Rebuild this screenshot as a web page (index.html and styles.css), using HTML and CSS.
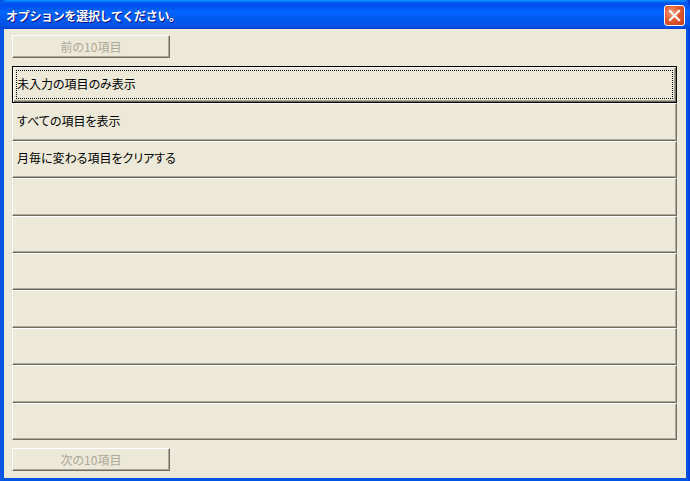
FILE: index.html
```html
<!DOCTYPE html>
<html lang="ja">
<head>
<meta charset="utf-8">
<link rel="stylesheet" href="styles.css">
</head>
<body>
<div class="window">
  <div class="titlebar">
    <span class="title">オプションを選択してください。</span>
    <span class="close">
      <svg width="13" height="13" viewBox="0 0 13 13"><path d="M2 2 L11 11 M11 2 L2 11" stroke="#fff" stroke-width="2.2" stroke-linecap="square"/></svg>
    </span>
  </div>
  <div class="client">
    <div class="btn disabled">前の10項目</div>
    <div class="list">
      <div class="row focused"><span class="focus">未入力の項目のみ表示</span></div>
      <div class="row"><span class="label">すべての項目を表示</span></div>
      <div class="row"><span class="label">月毎に変わる項目をクリアする</span></div>
      <div class="row"></div>
      <div class="row"></div>
      <div class="row"></div>
      <div class="row"></div>
      <div class="row"></div>
      <div class="row"></div>
      <div class="row"></div>
    </div>
    <div class="btn disabled">次の10項目</div>
  </div>
</div>
</body>
</html>
```
FILE: styles.css
```css
html, body {
  margin: 0;
  padding: 0;
  background: #0054E3;
}
.window {
  width: 690px;
  height: 481px;
  display: flex;
  flex-direction: column;
  background: linear-gradient(to right, #0831D9 0, #166AEE 1px, #0054E3 2px, #0054E3 688px, #0831D9 690px);
  font-family: "Noto Sans CJK JP", "Noto Sans", sans-serif;
  font-size: 12px;
  box-sizing: border-box;
}
.titlebar {
  height: 29px;
  flex: none;
  display: flex;
  align-items: center;
  justify-content: space-between;
  padding: 0 5px 0 6px;
  background: linear-gradient(to bottom, #0997FF 0, #0053EE 3px, #0050EE 6px, #0066FF 12px, #0058EE 20px, #0055EA 25px, #0048D8 28px, #003DD7 29px);
  border-radius: 7px 7px 0 0;
}
.title {
  color: #fff;
  font-weight: bold;
  font-size: 12px;
  letter-spacing: -0.3px;
  text-shadow: 1px 1px 0 #0F1089;
  margin-top: 1px;
}
.close {
  width: 19px;
  height: 19px;
  margin-top: 2px;
  border: 1px solid #fff;
  border-radius: 3px;
  background: radial-gradient(circle at 35% 35%, #F39C7E 0, #E45A30 45%, #C4391A 100%);
  display: flex;
  align-items: center;
  justify-content: center;
}
.client {
  flex: 1;
  margin: 0 4px 3px 4px;
  background: #ECE9D8;
  padding: 6px 9px 7px 8px;
  display: flex;
  flex-direction: column;
  gap: 8px;
}
.btn {
  width: 158px;
  height: 23px;
  box-sizing: border-box;
  border: 1px solid;
  border-color: #FFFFFF #716F64 #716F64 #FFFFFF;
  box-shadow: inset -1px -1px 0 #ACA899;
  display: flex;
  align-items: center;
  justify-content: center;
  flex: none;
  font-feature-settings: "palt";
  padding-bottom: 1px;
}
.disabled {
  color: #ACA899;
}
.list {
  height: 374px;
  flex: none;
  display: grid;
  grid-template-rows: repeat(10, 1fr);
}
.row {
  box-sizing: border-box;
  border: 1px solid;
  border-color: #FFFFFF #716F64 #716F64 #FFFFFF;
  box-shadow: inset -1px -1px 0 #ACA899;
  display: flex;
  align-items: center;
  padding-left: 3px;
  padding-bottom: 3px;
  color: #000;
  font-feature-settings: "palt";
}
.label {
  padding-left: 1px;
}
.row.focused {
  border: 1px solid #000;
  box-shadow: inset 1px 1px 0 #FFFFFF, inset -1px -1px 0 #716F64, inset -2px -2px 0 #ACA899;
  padding: 3px;
}
.focus {
  flex: 1;
  align-self: stretch;
  display: flex;
  align-items: center;
  border: 1px dotted #000;
  padding-left: 0;
  padding-bottom: 2px;
}
```
